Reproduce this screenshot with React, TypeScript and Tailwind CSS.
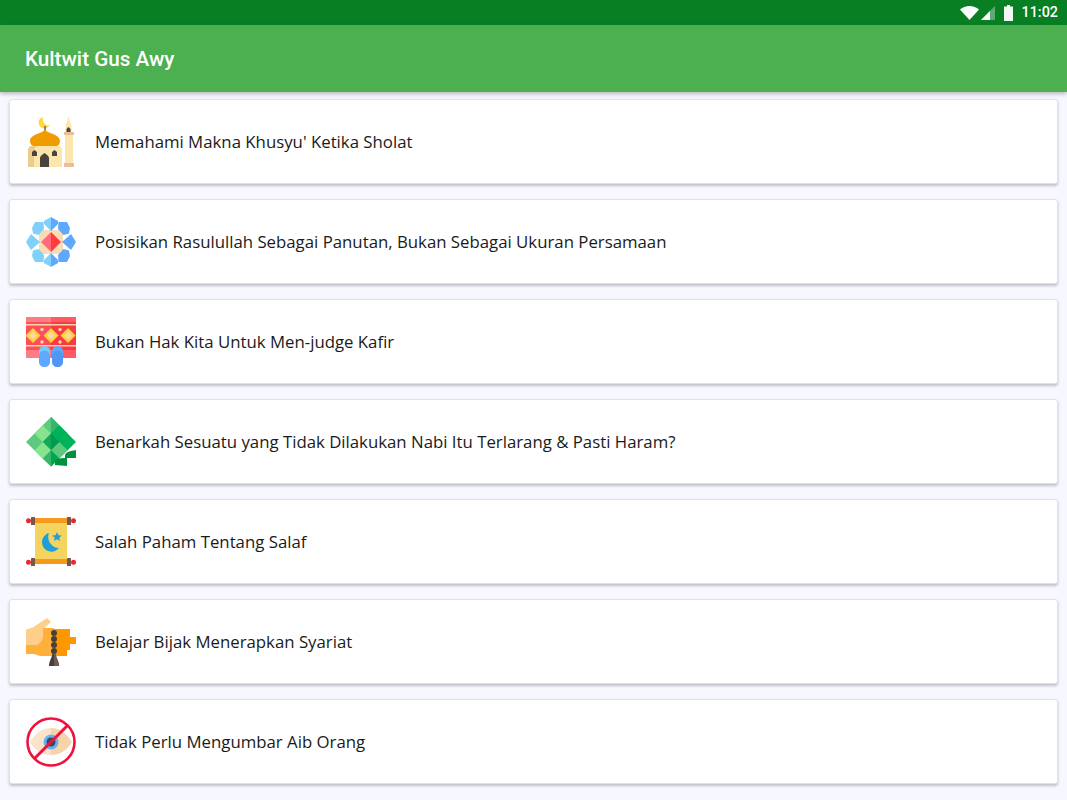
import React from 'react';

const MosqueIcon = () => (
  <svg viewBox="0 0 50 50" className="w-[50px] h-[50px]">
    <path d="M17 0a5.800 5.800 0 1 0 6.500 8.500a6.500 6.500 0 0 1-6.500-8.500z" fill="#ffd83b" />
    <rect x="18.300" y="9" width="1.400" height="5" fill="#6b5a45" />
    <path d="M4 29h30l2 3v18H2V32z" fill="#fde6ac" />
    <path d="M4 29h7l-3 3v18H2V32z" fill="#e8cd8e" />
    <path d="M19 12.500C16 17 4 17 4 24c0 3 2 5 4 5h22c2 0 4-2 4-5c0-7-12-7-15-11.500z" fill="#f09b00" />
    <path d="M14 50v-9c0-2 3-4 4.500-5c1.500 1 4.500 3 4.500 5v9z" fill="#4a443c" />
    <path d="M6 39v-4l2.500-2l2.500 2v4z" fill="#4a443c" />
    <path d="M26 39v-4l2.500-2l2.500 2v4z" fill="#4a443c" />
    <path d="M43 0c.5 4 1 6 2.500 8v7h-6V8c1.500-2 2-4 2.500-8z" fill="#fde6ac" />
    <rect x="38" y="15" width="10" height="3" fill="#e8bf9a" />
    <path d="M40.500 15v-3l2-2l2 2v3z" fill="#4a443c" />
    <rect x="39" y="18" width="8" height="28" fill="#fde6ac" />
    <rect x="38" y="46" width="10" height="4" fill="#e8bf9a" />
  </svg>
);

const FlowerIcon = () => (
  <svg viewBox="0 0 50 50" className="w-[50px] h-[50px]">
    <rect x="13" y="13" width="24" height="24" fill="#f8dcb4" />
    <path d="M25 0v14l-7-7V4z" fill="#7fd0fa" />
    <path d="M25 0v14l7-7V4z" fill="#5fa8ff" />
    <path d="M25 50V36l-7 7v3z" fill="#7fd0fa" />
    <path d="M25 50V36l7 7v3z" fill="#5fa8ff" />
    <path d="M0 25l5-8l9 8l-9 8z" fill="#7fd0fa" />
    <path d="M50 25l-5-8l-9 8l9 8z" fill="#5fa8ff" />
    <path d="M9 5h8.500l.5 7l-5.500 6L7 16.500L6 11z" fill="#7fd0fa" />
    <path d="M41 5h-8.500l-.5 7l5.500 6l5.500-1.500l1-5.500z" fill="#5fa8ff" />
    <path d="M9 45h8.500l.5-7l-5.500-6L7 33.500L6 39z" fill="#7fd0fa" />
    <path d="M41 45h-8.500l-.5-7l5.500-6l5.500 1.500l1 5.500z" fill="#5fa8ff" />
    <path d="M25 15l-10 10l10 10z" fill="#ff6b78" />
    <path d="M25 15l10 10l-10 10z" fill="#ff3b3f" />
  </svg>
);

const RugIcon = () => (
  <svg viewBox="0 0 50 50" className="w-[50px] h-[50px]">
    <rect x="0" y="0" width="25" height="41" fill="#ff4d5c" />
    <rect x="25" y="0" width="25" height="41" fill="#f93a45" />
    <rect x="0" y="0" width="25" height="5" fill="#ff7b85" />
    <rect x="25" y="0" width="25" height="5" fill="#ff5a66" />
    <rect x="0" y="7" width="50" height="1.500" fill="#fbd7a8" />
    <rect x="0" y="28" width="50" height="1.500" fill="#fbd7a8" />
    <rect x="0" y="33" width="25" height="8" fill="#ff7b85" />
    <rect x="25" y="33" width="25" height="8" fill="#ff5a66" />
    {[7, 25, 42].map((x) => (
      <g key={x}>
        <path d={`M${x} 11l7.500 7.500l-7.500 7.500l-7.500-7.500z`} fill="#ffd33b" />
        <path d={`M${x} 14.500l4 4l-4 4l-4-4z`} fill="#fbd7a8" />
      </g>
    ))}
    {[16, 34].map((x) => (
      <g key={x} fill="#fbd7a8">
        <circle cx={x} cy="12.500" r="1.700" />
        <circle cx={x} cy="25" r="1.700" />
      </g>
    ))}
    <rect x="13" y="29" width="11" height="21" rx="5.500" fill="#74ccf8" />
    <rect x="26" y="29" width="11" height="21" rx="5.500" fill="#5fa8ff" />
    <path d="M13 39a5.500 5.500 0 0 1 11 0v5.500a5.500 5.500 0 0 1-11 0z" fill="#5fa8ff" />
    <path d="M26 39a5.500 5.500 0 0 1 11 0v5.500a5.500 5.500 0 0 1-11 0z" fill="#4f97f5" />
  </svg>
);

const KetupatIcon = () => (
  <svg viewBox="0 0 50 50" className="w-[50px] h-[50px]">
    <path d="M25 0L0 25l25 24.500z" fill="#5cc97e" />
    <path d="M25 0l25 25l-25 24.500z" fill="#00b35a" />
    <path d="M25 0l8.300 8.300L25 16.600z" fill="#38b56a" />
    <path d="M16.700 8.300L8.400 16.600l8.300 8.400L25 16.600z" fill="#86e58c" />
    <path d="M33.300 8.300l8.300 8.300L33.300 25L25 16.600z" fill="#00b35a" />
    <path d="M16.700 25L25 33.300V16.600z" fill="#12a85a" />
    <path d="M33.300 25L25 33.300V16.600z" fill="#009a4e" />
    <path d="M16.700 25l-8.300 8.400l8.300 8.300L25 33.300z" fill="#86e58c" />
    <path d="M33.300 25L25 33.300l8.300 8.300l8.300-8.300z" fill="#5cc97e" />
    <path d="M25 33.300l8.300 8.300L25 49.500z" fill="#00a652" />
    <path d="M25 33.300l-8.300 8.300L25 49.500z" fill="#38b56a" />
    <path d="M39 38c1-3 5-4 11-5v8H39z" fill="#00913f" />
    <path d="M29 43c4-2 8-2 12-2v8l-12-1z" fill="#00913f" />
  </svg>
);

const ScrollIcon = () => (
  <svg viewBox="0 0 50 50" className="w-[50px] h-[50px]">
    <rect x="9" y="3" width="32" height="42" fill="#f4d35e" />
    <rect x="8" y="1" width="34" height="5" fill="#f59a1c" />
    <rect x="8" y="42" width="34" height="5" fill="#f59a1c" />
    <rect x="5" y="0" width="4" height="8" rx="0.500" fill="#7a5548" />
    <rect x="41" y="0" width="4" height="8" rx="0.500" fill="#7a5548" />
    <rect x="5" y="41" width="4" height="8" rx="0.500" fill="#7a5548" />
    <rect x="41" y="41" width="4" height="8" rx="0.500" fill="#7a5548" />
    <circle cx="2.500" cy="3.700" r="2.500" fill="#e8282e" />
    <circle cx="47.500" cy="3.700" r="2.500" fill="#e8282e" />
    <circle cx="2.500" cy="45.300" r="2.500" fill="#e8282e" />
    <circle cx="47.500" cy="45.300" r="2.500" fill="#e8282e" />
    <path d="M23 16A9.500 9.500 0 1 0 33 31A11 11 0 0 1 23 16z" fill="#1e9fd8" />
    <path d="M31 15l1.400 3.200l3.400.3l-2.600 2.200l.8 3.300l-3-1.800l-3 1.800l.8-3.300l-2.600-2.200l3.400-.3z" fill="#1e9fd8" />
  </svg>
);

const HandIcon = () => (
  <svg viewBox="0 0 50 50" className="w-[50px] h-[50px]">
    <path d="M6 11L21 1l4 4l-8 7z" fill="#ffce8a" />
    <path d="M0 13l6-2h22v28H14l-6-2H0z" fill="#ffb03b" />
    <path d="M0 13l6-2h11v9c-1 4-3 6-6 8H0z" fill="#ffce8a" />
    <path d="M28 12h16v8h6v7h-6v6h-3v6H28z" fill="#ff9800" />
    <circle cx="28" cy="16" r="3" fill="#4a3f38" />
    <circle cx="28" cy="22" r="3" fill="#4a3f38" />
    <circle cx="28" cy="28" r="3" fill="#4a3f38" />
    <circle cx="28" cy="34" r="3" fill="#4a3f38" />
    <path d="M26.500 36h3c.5 5 3.500 8 3.500 13H23c0-5 3-8 3.500-13z" fill="#4a3f38" />
    <path d="M28 36h1.500c.5 5 3.500 8 3.500 13h-5z" fill="#6b5d54" />
  </svg>
);

const NoEyeIcon = () => (
  <svg viewBox="0 0 50 50" className="w-[50px] h-[50px]">
    <path d="M4 25C10 15 18 11 25 11v27C18 38 10 35 4 25z" fill="#fae3c8" />
    <path d="M46 25C40 15 32 11 25 11v27C32 38 40 35 46 25z" fill="#f6d3a8" />
    <circle cx="25" cy="25" r="7.500" fill="#5fb4f4" />
    <circle cx="25" cy="25" r="4.500" fill="#3a4a57" />
    <circle cx="25" cy="25" r="23.500" fill="none" stroke="#f0123c" strokeWidth="2.600" />
    <path d="M8.500 41.500L41.500 8.500" stroke="#f0123c" strokeWidth="3" />
  </svg>
);

const items = [
  { title: "Memahami Makna Khusyu' Ketika Sholat", Icon: MosqueIcon },
  { title: 'Posisikan Rasulullah Sebagai Panutan, Bukan Sebagai Ukuran Persamaan', Icon: FlowerIcon },
  { title: 'Bukan Hak Kita Untuk Men-judge Kafir', Icon: RugIcon },
  { title: 'Benarkah Sesuatu yang Tidak Dilakukan Nabi Itu Terlarang & Pasti Haram?', Icon: KetupatIcon },
  { title: 'Salah Paham Tentang Salaf', Icon: ScrollIcon },
  { title: 'Belajar Bijak Menerapkan Syariat', Icon: HandIcon },
  { title: 'Tidak Perlu Mengumbar Aib Orang', Icon: NoEyeIcon },
];

const StatusBar = () => (
  <div className="h-[25px] bg-[#087f23] flex items-center justify-end pr-[9px] shrink-0">
    <svg viewBox="0 0 19 14" className="w-[19px] h-[14px] mr-[2px]">
      <path d="M0 3.500C2.600 1.300 5.900 0 9.500 0s6.900 1.300 9.500 3.500L9.500 14z" fill="#fff" />
    </svg>
    <svg viewBox="0 0 14 14" className="w-[14px] h-[14px] mr-[9px]">
      <path d="M14 0v14H0z" fill="#fff" opacity="0.35" />
      <path d="M9 5v9H0z" fill="#fff" />
    </svg>
    <svg viewBox="0 0 9 16" className="w-[9px] h-[16px] mr-[8px]">
      <path d="M3 0h3v1.500h3V16H0V1.500h3z" fill="#fff" opacity="0.95" />
    </svg>
    <span className="text-white text-[14.400px] font-medium font-['Roboto',sans-serif] pt-[1px]">11:02</span>
  </div>
);

export default function App() {
  return (
    <div className="h-[800px] overflow-hidden bg-[#f6f7ff] flex flex-col font-['Open_Sans',sans-serif]">
      <StatusBar />
      <header className="h-[67px] bg-[#4caf50] flex items-center pl-[25px] pt-[3px] shrink-0 shadow-[0_2px_4px_rgba(0,0,0,0.25)] z-10">
        <h1 className="text-white text-[20.700px] font-medium font-['Roboto',sans-serif]">Kultwit Gus Awy</h1>
      </header>
      <div className="flex flex-col gap-[15px] pt-[7px] px-[9px]">
        {items.map(({ title, Icon }) => (
          <div
            key={title}
            className="h-[85px] shrink-0 bg-white rounded-[3px] flex items-center gap-[19px] pl-[16px] border border-[#e2e2e4] shadow-[0_2px_3px_rgba(0,0,0,0.22)]"
          >
            <Icon />
            <span className="text-[16.800px] text-[#1a1a1a]">{title}</span>
          </div>
        ))}
      </div>
    </div>
  );
}
